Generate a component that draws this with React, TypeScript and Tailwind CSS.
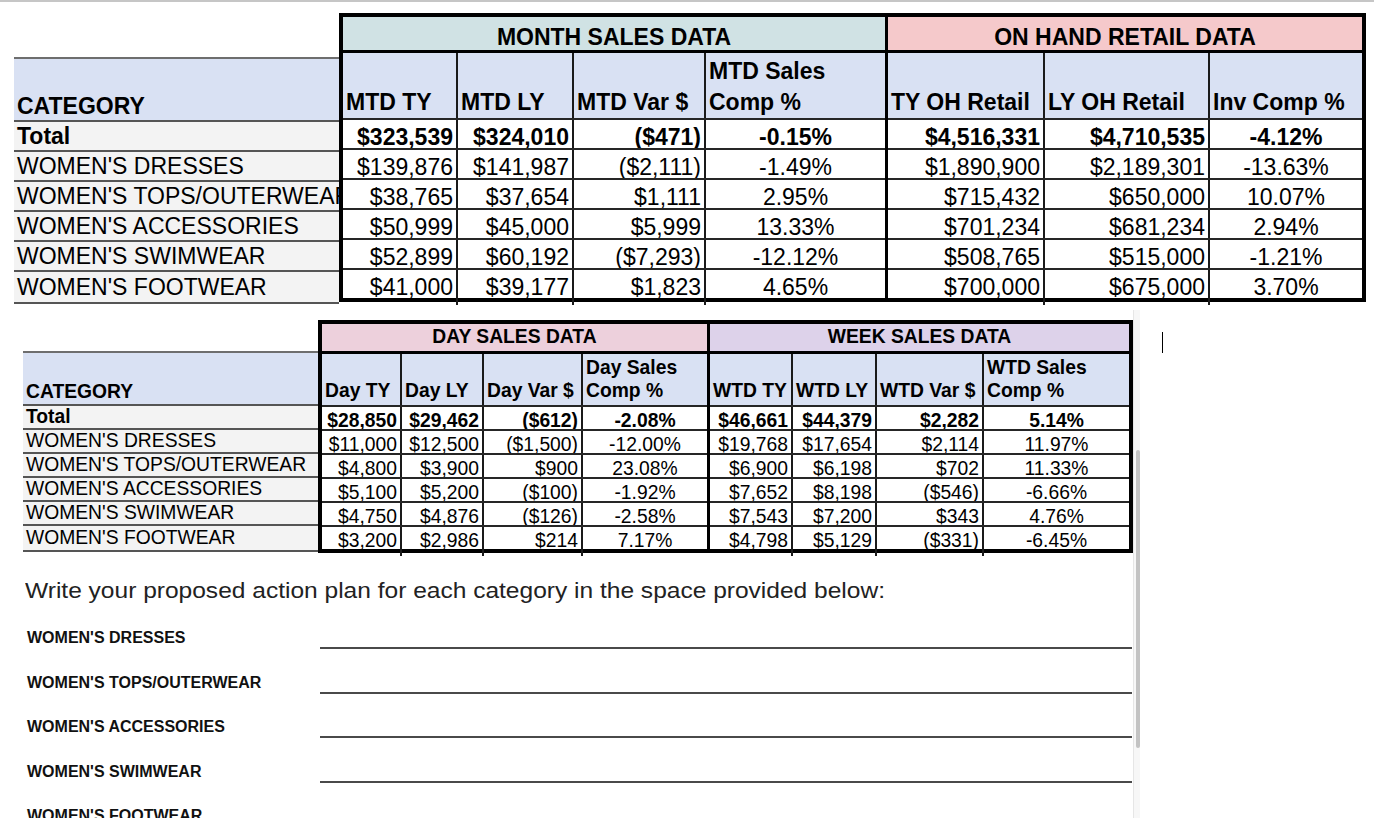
import clsx from 'clsx'

const categories = [
  'Total',
  "WOMEN'S DRESSES",
  "WOMEN'S TOPS/OUTERWEAR",
  "WOMEN'S ACCESSORIES",
  "WOMEN'S SWIMWEAR",
  "WOMEN'S FOOTWEAR",
]

const monthRows = [
  ['$323,539', '$324,010', '($471)', '-0.15%'],
  ['$139,876', '$141,987', '($2,111)', '-1.49%'],
  ['$38,765', '$37,654', '$1,111', '2.95%'],
  ['$50,999', '$45,000', '$5,999', '13.33%'],
  ['$52,899', '$60,192', '($7,293)', '-12.12%'],
  ['$41,000', '$39,177', '$1,823', '4.65%'],
]

const onHandRows = [
  ['$4,516,331', '$4,710,535', '-4.12%'],
  ['$1,890,900', '$2,189,301', '-13.63%'],
  ['$715,432', '$650,000', '10.07%'],
  ['$701,234', '$681,234', '2.94%'],
  ['$508,765', '$515,000', '-1.21%'],
  ['$700,000', '$675,000', '3.70%'],
]

const dayRows = [
  ['$28,850', '$29,462', '($612)', '-2.08%'],
  ['$11,000', '$12,500', '($1,500)', '-12.00%'],
  ['$4,800', '$3,900', '$900', '23.08%'],
  ['$5,100', '$5,200', '($100)', '-1.92%'],
  ['$4,750', '$4,876', '($126)', '-2.58%'],
  ['$3,200', '$2,986', '$214', '7.17%'],
]

const weekRows = [
  ['$46,661', '$44,379', '$2,282', '5.14%'],
  ['$19,768', '$17,654', '$2,114', '11.97%'],
  ['$6,900', '$6,198', '$702', '11.33%'],
  ['$7,652', '$8,198', '($546)', '-6.66%'],
  ['$7,543', '$7,200', '$343', '4.76%'],
  ['$4,798', '$5,129', '($331)', '-6.45%'],
]

const planItems = [
  "WOMEN'S DRESSES",
  "WOMEN'S TOPS/OUTERWEAR",
  "WOMEN'S ACCESSORIES",
  "WOMEN'S SWIMWEAR",
  "WOMEN'S FOOTWEAR",
]

type Size = {
  text: string
  title: string
  head: string
  headCell: string
  row: string
  catHead: string
}

const big: Size = {
  text: 'text-[23px]',
  title: 'h-[36px] pt-[7px]',
  head: 'h-[65px] leading-[31px]',
  headCell: '',
  row: 'h-[30px]',
  catHead: 'h-[63px] leading-[28px]',
}

const small: Size = {
  text: 'text-[19.3px]',
  title: 'h-[30px]',
  head: 'h-[51px] leading-[23px]',
  headCell: 'pb-[3px]',
  row: 'h-[24px]',
  catHead: 'h-[53px] leading-[24px]',
}

function CategoryCol({ s, className }: { s: Size; className: string }) {
  return (
    <div className={clsx('flex flex-col', s.text, className)}>
      <div className={clsx('flex items-end bg-[#d9e1f3] border-t-2 border-[#6e6e6e] font-bold pl-[3px]', s.catHead)}>
        CATEGORY
      </div>
      {categories.map((c, i) => (
        <div
          key={c}
          className={clsx(
            'flex items-center bg-[#f3f3f3] border-t-2 border-[#555] pl-[3px] whitespace-nowrap overflow-hidden',
            s.row,
            i === 0 && 'font-bold',
            i === categories.length - 1 && 'border-b-2 box-content'
          )}
        >
          {c}
        </div>
      ))}
    </div>
  )
}

function Group({
  title,
  titleBg,
  cols,
  headers,
  rows,
  s,
  divider,
}: {
  title: string
  titleBg: string
  cols: string
  headers: string[]
  rows: string[][]
  s: Size
  divider?: boolean
}) {
  return (
    <div className={clsx('flex flex-col', divider && 'border-r-[3px] border-black')}>
      <div className={clsx('flex items-center justify-center font-bold border-b-[3px] border-black', titleBg, s.title)}>
        {title}
      </div>
      <div className={clsx('grid bg-[#d9e1f3]', cols, s.head)}>
        {headers.map((h, i) => (
          <div
            key={h}
            className={clsx(
              'flex items-end font-bold whitespace-pre-line pl-[3px]',
              s.headCell,
              i < headers.length - 1 && 'border-r-2 border-[#1a1a1a]'
            )}
          >
            {h}
          </div>
        ))}
      </div>
      {rows.map((r, ri) => (
        <div
          key={ri}
          className={clsx('grid bg-white border-t-2 border-[#262626]', cols, s.row, ri === 0 && 'font-bold')}
        >
          {r.map((v, ci) => (
            <div
              key={ci}
              className={clsx(
                'flex items-center whitespace-nowrap',
                ci === r.length - 1 ? 'justify-center' : 'justify-end pr-[3px]',
                ci < r.length - 1 && 'border-r-2 border-[#1a1a1a]'
              )}
            >
              {v}
            </div>
          ))}
        </div>
      ))}
    </div>
  )
}

export default function App() {
  return (
    <div className="relative h-[818px] overflow-hidden bg-white text-black font-['Liberation_Sans',Arial,sans-serif]">
      <div className="h-[2px] bg-[#c6c6c6]" />

      {/* month + on hand */}
      <div className="mt-[11px] flex items-start pl-[14px]">
        <CategoryCol s={big} className="mt-[44px] w-[325px]" />
        <div className={clsx('flex border-4 border-black', big.text)}>
          <Group
            title="MONTH SALES DATA"
            titleBg="bg-[#d0e2e4]"
            cols="grid-cols-[115px_116px_132px_179px]"
            headers={['MTD TY', 'MTD LY', 'MTD Var $', 'MTD Sales\nComp %']}
            rows={monthRows}
            s={big}
            divider
          />
          <Group
            title="ON HAND RETAIL DATA"
            titleBg="bg-[#f5c9cb]"
            cols="grid-cols-[157px_165px_152px]"
            headers={['TY OH Retail', 'LY OH Retail', 'Inv Comp %']}
            rows={onHandRows}
            s={big}
          />
        </div>
      </div>

      {/* day + week */}
      <div className="mt-[16px] flex items-start pl-[23px]">
        <CategoryCol s={small} className="mt-[31px] w-[295px]" />
        <div className={clsx('flex border-4 border-black', small.text)}>
          <Group
            title="DAY SALES DATA"
            titleBg="bg-[#edd0dc]"
            cols="grid-cols-[80px_82px_99px_124px]"
            headers={['Day TY', 'Day LY', 'Day Var $', 'Day Sales\nComp %']}
            rows={dayRows}
            s={small}
            divider
          />
          <Group
            title="WEEK SALES DATA"
            titleBg="bg-[#ddd2ea]"
            cols="grid-cols-[83px_84px_107px_145px]"
            headers={['WTD TY', 'WTD LY', 'WTD Var $', 'WTD Sales\nComp %']}
            rows={weekRows}
            s={small}
          />
        </div>
      </div>

      <p className="mt-[25px] ml-[25px] w-fit origin-left scale-x-[1.115] text-[22px] leading-[26px] text-[#222]">
        Write your proposed action plan for each category in the space provided below:
      </p>

      <div className="mt-[13px] flex flex-col">
        {planItems.map((p, i) => (
          <div key={p} className="flex h-[44.5px] items-start">
            <div className="mt-[12px] w-[320px] pl-[27px] text-[16px] font-bold leading-[18px] text-[#111]">{p}</div>
            {i < planItems.length - 1 && <div className="mt-[30px] h-[2px] w-[812px] bg-[#4a4a4a]" />}
          </div>
        ))}
      </div>

      {/* text cursor */}
      <div className="absolute left-[1162px] top-[332px] h-[21px] w-px bg-black" />

      {/* scrollbar */}
      <div className="absolute left-[1133px] top-[310px] h-[508px] w-[7px] border-l border-[#e6e6e6] bg-[#f7f7f7]">
        <div className="ml-[2px] mt-[140px] h-[298px] w-[4px] rounded-full bg-[#c3c3c3]" />
      </div>
    </div>
  )
}
